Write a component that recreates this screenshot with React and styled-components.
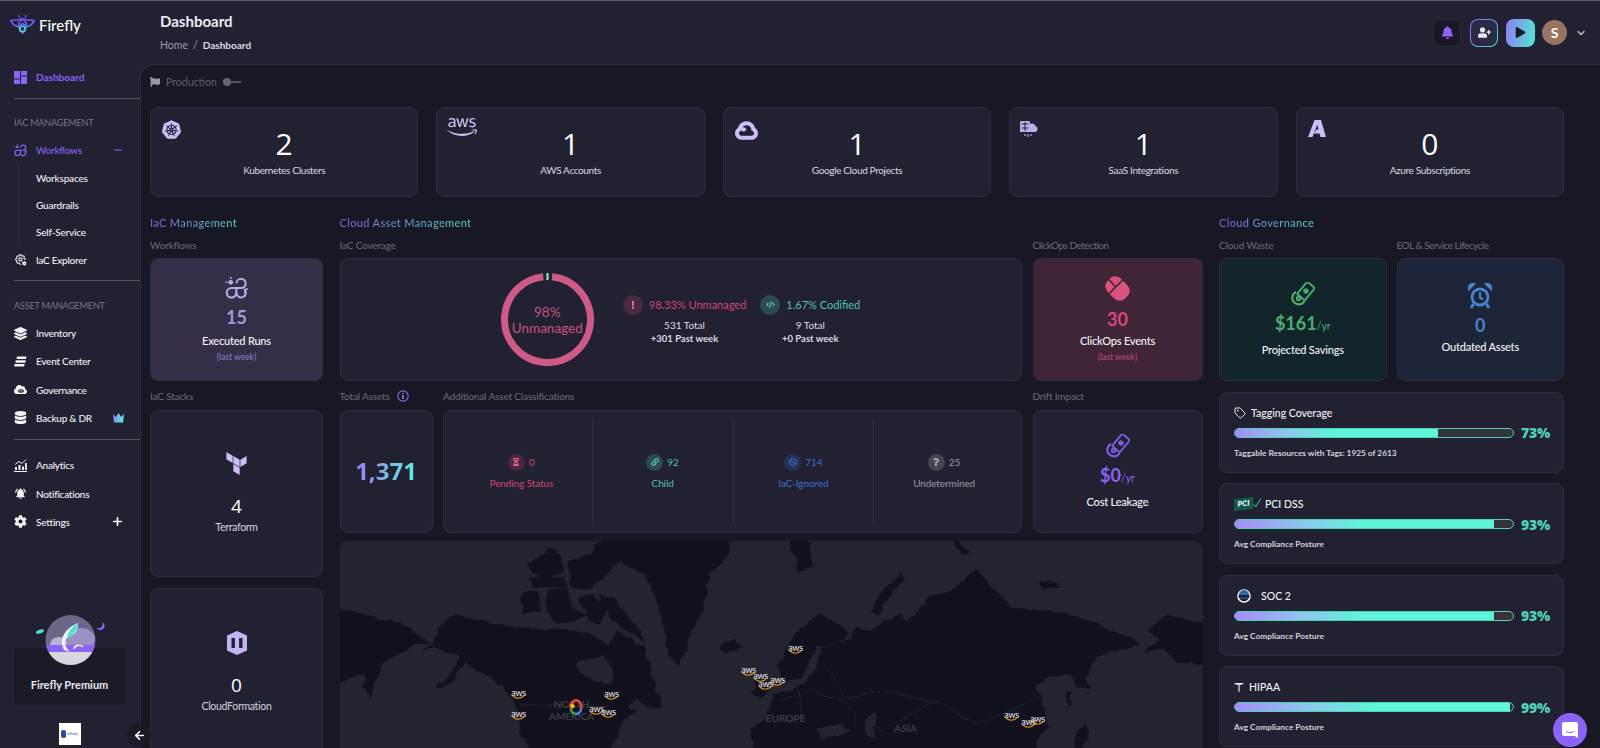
import styled, { createGlobalStyle } from 'styled-components'
import { FaAws, FaBell, FaCog, FaDatabase, FaLayerGroup, FaMouse, FaPlay, FaUserPlus, FaQuestion, FaExclamation, FaCode, FaHourglassHalf, FaBan, FaLink, FaFlag, FaCloud, FaEye } from 'react-icons/fa'
import { SiKubernetes, SiGooglecloud, SiTerraform } from 'react-icons/si'
import { LuTag, LuChevronDown, LuArrowLeft, LuPlus, LuMinus } from 'react-icons/lu'
import { MdNotificationsActive } from 'react-icons/md'
import { TbSettingsCog } from 'react-icons/tb'

const FONT = 'Lato, "Open Sans", sans-serif'

const GlobalStyle = createGlobalStyle`
	* { box-sizing: border-box; }
	html, body { margin: 0; height: 100%; background: #212132; overflow: hidden; }
	body { font-family: ${FONT}; color: #fff; }
`

const Shell = styled.div`
	display: flex;
	width: 1600px;
	height: 748px;
	border-top: 1px solid #5a5a60;
	background: #212132;
	position: relative;
	overflow: hidden;
`

/* Sidebar */
const Sidebar = styled.aside`
	width: 140px;
	flex-shrink: 0;
	height: 100%;
	display: flex;
	flex-direction: column;
	padding-left: 14px;
`
const Brand = styled.div`
	height: 47px;
	margin: 0 0 15px -4px;
	display: flex;
	align-items: center;
	gap: 4px;
	font-size: 15px;
	font-weight: 500;
`
const NavItem = styled.div`
	height: 28.3px;
	flex-shrink: 0;
	margin-top: ${(p) => p.$top || 0}px;
	display: flex;
	align-items: center;
	gap: 9px;
	font-size: 10px;
	letter-spacing: ${(p) => (p.$strong ? 0 : -0.25)}px;
	font-weight: ${(p) => (p.$strong ? 700 : 500)};
	color: ${(p) => (p.$active ? '#8b63f6' : '#f1f1f6')};
	svg.lead { width: 13px; height: 13px; flex-shrink: 0; }
`
const NavTail = styled.span`
	margin-left: auto;
	margin-right: 16px;
	display: flex;
	align-items: center;
	color: ${(p) => p.$color || '#fff'};
`
const NavTitle = styled.div`
	height: 14px;
	line-height: 14px;
	margin: ${(p) => p.$top}px 0 6px;
	font-size: 9px;
	letter-spacing: -0.15px;
	color: #777783;
`
const NavRule = styled.div`
	height: 1px;
	flex-shrink: 0;
	margin-top: ${(p) => p.$top}px;
	background: #55555f;
`
const SubNav = styled.div`
	margin-left: 4px;
	padding-left: 17px;
	border-left: 1px solid #2d2d40;
`
const SubItem = styled.div`
	height: 27px;
	display: flex;
	align-items: center;
	font-size: 10px;
	letter-spacing: -0.2px;
	font-weight: 500;
	color: #f1f1f6;
`
const SideFoot = styled.div`
	margin-top: auto;
	display: flex;
	flex-direction: column;
	align-items: center;
	width: 111px;
`
const PremiumCard = styled.div`
	position: relative;
	width: 111px;
	height: 57px;
	background: #1b1b28;
	border-radius: 4px;
	display: flex;
	align-items: flex-end;
	justify-content: center;
	padding-bottom: 14px;
	font-size: 11px;
	font-weight: 700;
	color: #e8e8ee;
`
const PremiumBadge = styled.svg`
	position: absolute;
	left: 20px;
	top: -36px;
`
const PartnerLogo = styled.div`
	width: 22px;
	height: 22px;
	margin: 18px 0 3px;
	background: #fff;
	display: flex;
	align-items: center;
	justify-content: center;
	gap: 1px;
	font-size: 3.5px;
	color: #2b4aa0;
`
const PartnerDot = styled.span`
	width: 5px;
	height: 8px;
	border-radius: 2px;
	background: #2b4aa0;
`
const CollapseButton = styled.div`
	position: absolute;
	left: 127px;
	top: 722px;
	width: 24px;
	height: 24px;
	border-radius: 50%;
	background: #1b1b28;
	display: flex;
	align-items: center;
	justify-content: center;
	z-index: 3;
`
const GovernanceGlyph = styled.span`
	position: relative;
	width: 13px;
	height: 13px;
	display: flex;
	flex-shrink: 0;
	svg + svg { position: absolute; left: 4px; top: 5px; }
`

/* Header */
const Content = styled.div`
	flex: 1;
	min-width: 0;
	display: flex;
	flex-direction: column;
`
const Header = styled.header`
	height: 63px;
	flex-shrink: 0;
	display: flex;
	justify-content: space-between;
	align-items: flex-start;
	padding: 10px 13px 0 20px;
`
const PageTitle = styled.h1`
	margin: 0;
	font-size: 15px;
	line-height: 20px;
	font-weight: 700;
	color: #ecebf2;
`
const Crumbs = styled.div`
	margin-top: 7px;
	display: flex;
	gap: 5px;
	font-size: 10.5px;
	line-height: 14px;
	color: #9b9ba6;
	b { font-size: 10px; font-weight: 700; color: #dcdce4; }
`
const Actions = styled.div`
	display: flex;
	align-items: center;
	height: 29px;
	margin-top: 7px;
	gap: 9px;
`
const ActionBox = styled.div`
	width: 28px;
	height: 28px;
	border-radius: 8px;
	display: flex;
	align-items: center;
	justify-content: center;
	background: #191925;
	border: 1px solid #2a2a3a;
`
const InviteBox = styled(ActionBox)`
	border: 1px solid transparent;
	background: linear-gradient(#2a2a44, #2a2a44) padding-box, linear-gradient(135deg, #8b63f6, #4fe3cc) border-box;
`
const PlayBox = styled(ActionBox)`
	border: 0;
	margin-left: -1px;
	width: 29px;
	background: linear-gradient(100deg, #8f7ff5, #50e8d0);
`
const Avatar = styled.div`
	width: 25px;
	height: 25px;
	margin-left: -2px;
	border-radius: 50%;
	background: #9a7260;
	display: flex;
	align-items: center;
	justify-content: center;
	font-size: 14px;
	font-weight: 700;
`
const Chevron = styled(LuChevronDown)`
	margin-left: -1px;
	color: #b8b8c0;
`

/* Panel */
const Panel = styled.main`
	flex: 1;
	min-height: 0;
	overflow: hidden;
	background: #181825;
	border-top: 1px solid #2b2b3d;
	border-left: 1px solid #2b2b3d;
	border-top-left-radius: 14px;
	padding: 0 35px 0 9px;
`
const EnvRow = styled.div`
	height: 34px;
	margin-bottom: 8px;
	display: flex;
	align-items: center;
	font-size: 10.5px;
	color: #5f5f6b;
	gap: 6px;
`
const Toggle = styled.span`
	position: relative;
	width: 18px;
	height: 2px;
	background: #55555f;
	&::before {
		content: '';
		position: absolute;
		left: 0;
		top: -3px;
		width: 8px;
		height: 8px;
		border-radius: 50%;
		background: #666670;
	}
`
const Card = styled.div`
	position: relative;
	background: ${(p) => p.$bg || '#212132'};
	border: 1px solid ${(p) => p.$line || '#2d2d42'};
	border-radius: 8px;
`
const TopRow = styled.div`
	display: grid;
	grid-template-columns: repeat(5, 1fr);
	gap: 18px;
	width: 1414px;
`
const TopCard = styled(Card)`
	height: 90px;
	display: flex;
	flex-direction: column;
	align-items: center;
	padding-top: 18px;
`
const TopIcon = styled.span`
	position: absolute;
	left: ${(p) => p.$left || 11}px;
	top: ${(p) => p.$top || 12}px;
	display: flex;
	color: #cdbdf6;
`
const TopValue = styled.div`
	font-family: "Open Sans", sans-serif;
	font-size: 30px;
	line-height: 36px;
	color: #fff;
`
const TopLabel = styled.div`
	margin-top: 1px;
	font-size: 10px;
	letter-spacing: -0.35px;
	line-height: 14px;
	color: #d9d9e0;
`
const Columns = styled.div`
	display: grid;
	grid-template-columns: 173px 863px 345px;
	column-gap: 16.5px;
	margin-top: 18px;
	width: 1415px;
`
const Column = styled.section`
	min-width: 0;
`
const Heading = styled.h2`
	margin: 0;
	width: max-content;
	font-size: 11px;
	line-height: 16px;
	font-weight: 500;
	letter-spacing: 0.35px;
	background: linear-gradient(90deg, #7c5cdc, #4fd1b8);
	-webkit-background-clip: text;
	background-clip: text;
	color: transparent;
`
const Label = styled.div`
	height: ${(p) => p.$h || 27}px;
	display: flex;
	align-items: center;
	gap: 7px;
	font-size: 10px;
	letter-spacing: ${(p) => (p.$tight ? -0.5 : -0.15)}px;
	color: #6c6c78;
`
const StatCard = styled(Card)`
	height: ${(p) => p.$h}px;
	display: flex;
	flex-direction: column;
	align-items: center;
	justify-content: center;
	padding-bottom: ${(p) => p.$pb || 0}px;
`
const StatIcon = styled.span`
	display: flex;
	margin-bottom: ${(p) => p.$mb || 6}px;
	color: ${(p) => p.$color};
`
const StatValue = styled.div`
	font-size: 18px;
	line-height: 22px;
	font-weight: 700;
	color: ${(p) => p.$color};
	small { font-size: 10.5px; font-weight: 400; }
`
const StatName = styled.div`
	margin-top: ${(p) => p.$mt || 5}px;
	font-size: 11px;
	letter-spacing: -0.2px;
	line-height: 15px;
	font-weight: 500;
	color: #f4f4f8;
`
const StatNote = styled.div`
	margin-top: 4px;
	font-size: 8.5px;
	line-height: 11px;
	color: ${(p) => p.$color};
`
const StackValue = styled.div`
	font-family: "Open Sans", sans-serif;
	font-size: 19px;
	line-height: 24px;
	color: #fff;
`
const StackName = styled.div`
	margin-top: 2px;
	font-size: 10.5px;
	letter-spacing: -0.3px;
	line-height: 15px;
	color: #d4d4dc;
`
const StackGap = styled.div`
	height: 11px;
`
const AssetGrid = styled.div`
	display: grid;
	grid-template-columns: 93px 579px 170px;
	column-gap: 10.5px;
`
const CoverageRow = styled.div`
	display: grid;
	grid-template-columns: 682px 170px;
	column-gap: 11px;
`
const CoverageCard = styled(Card)`
	height: 123px;
	display: flex;
	align-items: center;
	justify-content: center;
	gap: 29px;
`
const Donut = styled.div`
	position: relative;
	width: 93px;
	height: 93px;
	display: flex;
	flex-direction: column;
	align-items: center;
	justify-content: center;
	font-size: 13.5px;
	line-height: 16px;
	color: #c9527f;
	svg { position: absolute; inset: 0; }
`
const Legend = styled.div`
	display: flex;
	gap: 14px;
`
const LegendItem = styled.div`
	display: flex;
	flex-direction: column;
	align-items: center;
`
const LegendHead = styled.div`
	display: flex;
	align-items: center;
	gap: 6px;
	font-size: 11px;
	line-height: 20px;
	color: ${(p) => p.$color};
`
const IconDot = styled.span`
	width: ${(p) => p.$size || 20}px;
	height: ${(p) => p.$size || 20}px;
	border-radius: 50%;
	display: flex;
	align-items: center;
	justify-content: center;
	flex-shrink: 0;
	background: ${(p) => p.$bg};
	color: ${(p) => p.$color};
`
const LegendLine = styled.div`
	margin-top: ${(p) => p.$mt || 0}px;
	font-size: ${(p) => (p.$bold ? 9.5 : 10)}px;
	line-height: 13px;
	font-weight: ${(p) => (p.$bold ? 700 : 400)};
	color: #dcdce4;
`
const TotalCard = styled(Card)`
	height: 123px;
	display: flex;
	align-items: center;
	justify-content: center;
	padding-bottom: 3px;
`
const TotalValue = styled.div`
	font-family: "Open Sans", sans-serif;
	font-size: 24px;
	font-weight: 700;
	background: linear-gradient(90deg, #9a80f8, #5ef0d8);
	-webkit-background-clip: text;
	background-clip: text;
	color: transparent;
`
const ClassCard = styled(Card)`
	height: 123px;
	display: grid;
	grid-template-columns: repeat(4, 1fr);
	padding: 8px 7px;
`
const ClassCell = styled.div`
	display: flex;
	flex-direction: column;
	align-items: center;
	justify-content: center;
	gap: 5px;
	border-left: ${(p) => (p.$first ? 'none' : '1px solid #2f2f42')};
`
const ClassCount = styled.div`
	display: flex;
	align-items: center;
	gap: 4px;
	font-size: 10px;
	color: ${(p) => p.$color};
`
const ClassName = styled.div`
	font-size: 10px;
	letter-spacing: -0.1px;
	line-height: 14px;
	color: ${(p) => p.$color};
`
const TiltedMouse = styled(FaMouse)`
	transform: rotate(-45deg);
`

/* Map */
const MapBox = styled.div`
	position: relative;
	margin-top: 8px;
	height: 220px;
	border-radius: 8px;
	overflow: hidden;
	background: #24242f;
`
const MapArt = styled.svg`
	display: block;
`
const MapLabel = styled.span`
	position: absolute;
	left: ${(p) => p.$x}px;
	top: ${(p) => p.$y}px;
	transform: translate(-50%, -50%);
	text-align: center;
	font-size: 10px;
	line-height: 12px;
	font-weight: 700;
	color: #3c3c48;
`
const Pin = styled.span`
	position: absolute;
	left: ${(p) => p.$x}px;
	top: ${(p) => p.$y}px;
	transform: translate(-50%, -50%);
	display: flex;
	flex-direction: column;
	align-items: center;
	font-size: 9px;
	line-height: 7px;
	letter-spacing: -0.3px;
	color: #f0f0f0;
`

/* Governance */
const WasteRow = styled.div`
	display: grid;
	grid-template-columns: 167.5px 167.5px;
	column-gap: 10px;
`
const Gauge = styled(Card)`
	height: ${(p) => p.$h || 81}px;
	margin-top: 10.5px;
	padding: 11px 14px 0;
`
const GaugeTitle = styled.div`
	height: 18px;
	display: flex;
	align-items: center;
	gap: ${(p) => p.$gap || 5}px;
	font-size: 10.5px;
	font-weight: 500;
	color: #f4f4f8;
`
const GaugeRow = styled.div`
	display: flex;
	align-items: center;
	gap: 7px;
	margin-top: 5px;
	height: 12px;
`
const Track = styled.div`
	width: 280px;
	height: 10px;
	flex-shrink: 0;
	border: 1px solid #4fd1b8;
	border-radius: 5px;
	background: #333338;
	overflow: hidden;
`
const Fill = styled.div`
	height: 100%;
	width: ${(p) => p.$pct}%;
	background: linear-gradient(90deg, #a78bfa 0, #8ec5ee 25%, #5ef5d8 50%, #5ef5d8 100%);
`
const GaugeValue = styled.div`
	font-family: "Open Sans", sans-serif;
	font-size: 14px;
	font-weight: 800;
	letter-spacing: -0.2px;
	color: #4fd1b8;
`
const GaugeNote = styled.div`
	margin-top: 8px;
	font-size: 8.3px;
	line-height: 12px;
	font-weight: 700;
	color: #d4d4dc;
`
const PciMark = styled.span`
	position: relative;
	width: 19px;
	height: 12px;
	background: #125a50;
	transform: skewY(-6deg);
	font-size: 7.5px;
	line-height: 12px;
	font-weight: 900;
	text-align: center;
	color: #fff;
	margin-right: 7px;
	&::after {
		content: '';
		position: absolute;
		right: -6px;
		top: 1px;
		width: 3px;
		height: 8px;
		border-right: 1.5px solid #35c46a;
		border-bottom: 1.5px solid #35c46a;
		transform: rotate(35deg);
	}
`
const SocSlot = styled.span`
	display: flex;
	margin-left: 3px;
`
const ChatBubble = styled.div`
	position: absolute;
	right: 13px;
	top: 712px;
	width: 34px;
	height: 34px;
	border-radius: 50%;
	background: #8b63f6;
	display: flex;
	align-items: center;
	justify-content: center;
	z-index: 3;
`

/* Drawn icons */
const FireflyLogo = () => (
	<svg width="25" height="21" viewBox="0 0 25 21" fill="none">
		<defs>
			<linearGradient id="bee" x1="0" y1="0" x2="1" y2="1">
				<stop offset="0" stopColor="#7b4df0" />
				<stop offset="1" stopColor="#4d7ff0" />
			</linearGradient>
		</defs>
		<path d="M12.5 5 L7 6 L0.5 6.5 L4 11 L8 12.5 L12.5 9.5 L17 12.5 L21 11 L24.5 6.5 L18 6 Z" stroke="url(#bee)" strokeWidth="1.6" />
		<path d="M12.5 5 L9 8.5 L8.5 13 L12.5 19 L16.5 13 L16 8.5 Z" stroke="url(#bee)" strokeWidth="1.6" />
		<circle cx="12.5" cy="15" r="2.8" stroke="#4fd1e0" strokeWidth="1.6" />
		<path d="M10 4 L8.5 1 M15 4 L16.5 1" stroke="#7b4df0" strokeWidth="1.2" />
	</svg>
)
const DashboardIcon = () => (
	<svg className="lead" viewBox="0 0 13 13" fill="#8b63f6">
		<rect x="0" y="0" width="6" height="7.5" />
		<rect x="7" y="0" width="6" height="4.5" />
		<rect x="0" y="8.5" width="6" height="4.5" />
		<rect x="7" y="5.5" width="6" height="7.5" />
	</svg>
)
const WorkflowIcon = ({ size = 13, color = '#8b63f6' }) => (
	<svg className="lead" width={size} height={size} viewBox="0 0 24 24" fill="none" stroke={color} strokeWidth="2.2">
		<path d="M12 6.5 A4.8 4.8 0 1 1 16.8 11.5 H6.8 A5 5 0 1 0 11.8 16.5 V11.5" />
		<path d="M11.8 16.5 A5 5 0 1 0 20.5 13" />
		<path d="M21 17 L20.5 13 L24 12.5" strokeWidth="1.8" />
		<circle cx="6" cy="5.5" r="2.5" fill={color} stroke="none" />
		<path d="M6 0 V2.2 M0.5 5.5 H2.7" strokeWidth="1.6" />
	</svg>
)
const EventIcon = () => (
	<svg className="lead" viewBox="0 0 13 13" fill="#f1f1f6">
		<path d="M3 1.5 H12.5 L12 4 H2.5 Z M1.8 5.3 H11.8 L11.3 7.8 H1.3 Z M0.6 9.1 H10.6 L10.1 11.6 H0 Z" />
	</svg>
)
const GovernanceIcon = () => (
	<GovernanceGlyph>
		<FaCloud size={13} color="#f1f1f6" />
		<FaEye size={6} color="#212132" />
	</GovernanceGlyph>
)
const AnalyticsIcon = () => (
	<svg className="lead" viewBox="0 0 13 13" fill="#f1f1f6">
		<path d="M0 12 H13 V13 H0 Z M1 8 H3 V11 H1 Z M4.5 6 H6.5 V11 H4.5 Z M8 7.5 H10 V11 H8 Z M11 4 H12.8 V11 H11 Z" />
		<path d="M1 5.5 L5 2.5 L8 4.5 L12 0.5" stroke="#f1f1f6" fill="none" strokeWidth="1" />
	</svg>
)
const CrownIcon = () => (
	<svg width="11" height="10" viewBox="0 0 11 10">
		<defs>
			<linearGradient id="crown" x1="0" y1="0" x2="1" y2="0">
				<stop offset="0" stopColor="#8b8bf6" />
				<stop offset="1" stopColor="#5ef0e0" />
			</linearGradient>
		</defs>
		<path d="M0 1 L2.8 4 L5.5 0 L8.2 4 L11 1 L10 9.5 H1 Z" fill="url(#crown)" />
	</svg>
)
const RocketBadge = () => (
	<PremiumBadge width="72" height="54" viewBox="0 0 72 54">
		<defs>
			<clipPath id="globe">
				<circle cx="36.5" cy="28" r="25" />
			</clipPath>
		</defs>
		<ellipse cx="6" cy="19.5" rx="4.2" ry="1.8" fill="#4fe3cc" transform="rotate(-20 6 19.5)" />
		<path d="M68 10 A4.2 4.2 0 1 1 62.5 15.5 A4 4 0 0 0 68 10 Z" fill="#8b63f6" />
		<g clipPath="url(#globe)">
			<rect x="10" y="0" width="54" height="54" fill="#6b6789" />
			<ellipse cx="47" cy="27" rx="14" ry="11" fill="#9a92c4" />
			<ellipse cx="25" cy="33" rx="9" ry="8" fill="#b9b3d8" />
			<rect x="10" y="33" width="54" height="7" fill="#8b63f6" />
			<rect x="10" y="40" width="54" height="14" fill="#d8d8dc" />
			<path d="M30 38 C24 26 32 16 44 11 C45 20 38 24 33 26 C30 30 30 34 36 40 Z" fill="#f0f0f4" />
			<path d="M33 25 C35 18 39 14 44 11 C44 17 40 22 35 26 Z" fill="#4fe3cc" />
			<path d="M40 37 a5 4 0 0 1 9 -2" stroke="#fff" strokeWidth="1.4" fill="none" />
		</g>
	</PremiumBadge>
)
const SaasIcon = () => (
	<svg width="19" height="17" viewBox="0 0 19 17" fill="#bfaee8">
		<path d="M0 1.5 Q0 0 1.5 0 H8.5 Q10 0 10 1.5 V11 H0 Z" />
		<path d="M10 3 A4 4 0 0 1 15.5 5 A3.2 3.2 0 0 1 15.5 11 H10 Z" />
		<path d="M1.5 3 H8.5 M1.5 7 H8.5 M5 1 V10" stroke="#212132" strokeWidth="1" />
		<path d="M5 13 V15 M8 13 V16 M11 13 V15" stroke="#bfaee8" strokeWidth="1.2" />
	</svg>
)
const AzureIcon = () => (
	<svg width="18" height="17" viewBox="0 0 18 17" fill="#cdbdf6">
		<path d="M6.5 0 H13 L18 17 H12.5 L11.6 13.5 H6 L8.5 9.5 H10.5 L9.3 4.8 L4.5 17 H0 Z" />
	</svg>
)
const CloudFormationIcon = () => (
	<svg width="20" height="24" viewBox="0 0 20 24" fill="#c4b3f2">
		<path d="M10 0 L20 4.5 V19.5 L10 24 L0 19.5 V4.5 Z" />
		<rect x="4.5" y="7" width="3.4" height="10" fill="#212132" />
		<rect x="12.1" y="7" width="3.4" height="10" fill="#212132" />
	</svg>
)
const MoneyIcon = ({ color, size = 24 }) => (
	<svg width={size} height={size} viewBox="0 0 24 24" fill="none" stroke={color} strokeWidth="1.9">
		<g transform="rotate(-50 15 9)">
			<rect x="7" y="4" width="16" height="10" rx="1" />
			<circle cx="15" cy="9" r="2.7" fill={color} stroke="none" />
		</g>
		<path d="M5 10 A6.5 6.5 0 1 0 13.5 19" strokeWidth="2.2" />
		<circle cx="7.5" cy="16.5" r="1.7" />
	</svg>
)
const AlarmIcon = () => (
	<svg width="24" height="26" viewBox="0 0 24 26" fill="none" stroke="#4a84d0" strokeWidth="2.8">
		<circle cx="12" cy="14" r="8" />
		<path d="M12 9 V14.5 L15 16.5" strokeWidth="2.2" />
		<path d="M5.5 21 L3 25 M18.5 21 L21 25" />
		<path d="M0 8.5 A6 6 0 0 1 8 0.5 Z M24 8.5 A6 6 0 0 0 16 0.5 Z" fill="#4a84d0" stroke="none" />
	</svg>
)
const SocIcon = () => (
	<svg width="14" height="14" viewBox="0 0 14 14" fill="none">
		<circle cx="7" cy="7" r="6" stroke="#fff" strokeWidth="1.6" />
		<path d="M2 6 A5 5 0 0 1 12 6 Z" fill="#2a6cb0" />
		<path d="M1 7.3 H13" stroke="#212132" strokeWidth="1" />
		<path d="M3 9 H11" stroke="#2a6cb0" strokeWidth="1" />
	</svg>
)
const HipaaIcon = () => (
	<svg width="10" height="9" viewBox="0 0 10 9" fill="#e8e8ee">
		<path d="M0 0 H4.4 V1.8 H2 Z M10 0 H5.6 V1.8 H8 Z M4.4 0 H5.6 V9 L5 9 L4.4 8 Z" />
	</svg>
)
const ChatIcon = () => (
	<svg width="16" height="16" viewBox="0 0 16 16">
		<path d="M2.5 0 H13.5 Q16 0 16 2.5 V16 L12.5 14 H2.5 Q0 14 0 11.5 V2.5 Q0 0 2.5 0 Z" fill="#fff" />
		<path d="M4 9.5 Q8 12 12 9.5" stroke="#8b63f6" strokeWidth="1" fill="none" />
	</svg>
)

const WorldMap = () => (
	<MapArt width="863" height="208" viewBox="16 30 1574 624" preserveAspectRatio="none">
		<defs>
			<filter id="coast" x="-5%" y="-5%" width="110%" height="110%" colorInterpolationFilters="sRGB">
				<feTurbulence type="fractalNoise" baseFrequency="0.035" numOctaves="4" seed="7" result="noise" />
				<feDisplacementMap in="SourceGraphic" in2="noise" scale="16" xChannelSelector="R" yChannelSelector="G" />
			</filter>
		</defs>
		<g stroke="#28284a" strokeWidth="1.2" fill="none">
			<path d="M16 325 H1590 M150 30 V654 M470 30 V654 M790 30 V654 M1120 30 V654 M1440 30 V654" />
		</g>
		<g fill="#11111d" filter="url(#coast)">
			<path d="M6 225 L40 240 L60 250 L95 268 L130 280 L160 310 L180 335 L150 345 L120 375 L95 400 L70 500 L60 470 L58 430 L40 440 L6 465 Z" />
			<path
				fillRule="evenodd"
				d="M195 290 L225 250 L265 268 L345 292 L400 295 L440 300 L470 305 L490 330 L505 345 L520 300 L550 320 L555 345 L570 345 L580 400 L590 470 L605 530 L575 525 L555 500 L540 530 L560 540 L530 570 L520 620 L505 670 L365 670 L345 600 L340 540 L325 490 L290 440 L245 400 L205 470 L190 470 L225 410 L235 375 L190 350 L170 360 L190 325 Z M450 390 L500 375 L515 420 L510 460 L480 450 L450 420 Z"
			/>
			<path d="M345 185 L375 180 L385 240 L350 250 Z" />
			<path d="M390 175 L430 170 L440 230 L470 255 L410 280 L395 240 Z" />
			<path d="M450 200 L475 190 L505 230 L490 280 L470 270 Z" />
			<path d="M485 190 L515 200 L550 270 L575 330 L535 300 L510 260 Z" />
			<path d="M355 105 L400 50 L420 75 L425 120 L385 145 Z" />
			<path d="M430 90 L470 70 L500 15 L560 15 L530 90 L500 130 L470 180 L440 170 Z" />
			<path d="M360 140 L420 135 L435 165 L370 170 Z" />
			<path d="M530 70 L560 15 L730 15 L720 80 L690 130 L680 230 L650 330 L635 410 L615 370 L605 280 L590 180 L570 130 L535 100 Z" />
			<path d="M708 340 L740 325 L746 350 L725 368 L712 360 Z" />
			<path d="M772 445 L790 440 L798 480 L780 500 L762 490 L775 470 Z" />
			<path d="M815 400 L835 340 L870 270 L890 250 L925 275 L945 310 L920 335 L885 350 L870 400 L860 440 L840 450 L820 440 Z" />
			<path d="M895 350 L945 320 L960 290 L985 300 L1010 265 L1040 250 L1050 275 L1075 230 L1090 195 L1130 180 L1175 115 L1205 170 L1240 230 L1290 235 L1340 245 L1400 280 L1445 310 L1480 340 L1440 355 L1400 375 L1375 440 L1385 470 L1360 470 L1350 430 L1310 435 L1285 470 L1300 530 L1310 590 L1290 620 L1280 670 L770 670 L765 590 L790 570 L800 530 L810 490 L850 470 L880 430 L890 380 Z" />
			<path d="M985 250 L1000 190 L1040 125 L1040 150 L1010 210 L995 255 Z" />
			<path d="M835 20 L865 20 L880 100 L855 125 L845 70 Z" />
			<path d="M1290 150 L1310 145 L1330 170 L1300 170 Z" />
			<path d="M1130 15 L1170 65 L1150 70 Z" />
			<path d="M1490 295 L1525 250 L1568 270 L1610 280 L1610 400 L1540 395 L1520 350 L1485 365 L1505 325 Z" />
			<path d="M1360 600 L1375 580 L1380 620 L1360 670 Z" />
			<path d="M1340 480 L1350 480 L1345 540 Z" />
		</g>
		<g fill="#24242f" filter="url(#coast)">
			<path d="M880 590 L930 580 L945 600 L900 620 Z" />
			<path d="M975 560 L990 545 L995 620 L975 610 Z" />
		</g>
		<g stroke="#2b2b38" strokeWidth="1.5" fill="none" filter="url(#coast)">
			<path d="M820 510 L880 480 L940 510 M850 470 L860 560 M900 400 L940 500 L1010 480 L1100 510 L1180 580 L1250 530 L1290 500" />
			<path d="M940 510 L960 580 M1100 510 L1050 560 L1000 600 M345 523 H505" />
		</g>
	</MapArt>
)

const topCards = [
	{ label: 'Kubernetes Clusters', value: 2, icon: <SiKubernetes size={19} /> },
	{ label: 'AWS Accounts', value: 1, icon: <FaAws size={30} />, left: 10, top: 4 },
	{ label: 'Google Cloud Projects', value: 1, icon: <SiGooglecloud size={23} />, left: 11, top: 11 },
	{ label: 'SaaS Integrations', value: 1, icon: <SaasIcon />, left: 10, top: 13 },
	{ label: 'Azure Subscriptions', value: 0, icon: <AzureIcon /> },
]
const classes = [
	{ name: 'Pending Status', count: 0, color: '#d1476f', bg: '#4a2a42', tone: '#e85d8c', icon: <FaHourglassHalf size={8} /> },
	{ name: 'Child', count: 92, color: '#4fc4ac', bg: '#2d4a50', tone: '#4fc4ac', icon: <FaLink size={8} /> },
	{ name: 'IaC-Ignored', count: 714, color: '#3b6fd0', bg: '#24325a', tone: '#3b6fd0', icon: <FaBan size={8} /> },
	{ name: 'Undetermined', count: 25, color: '#9a9aa6', bg: '#45454f', tone: '#b0b0b8', icon: <FaQuestion size={8} /> },
]
const awsPins = [
	[179, 153], [179, 174], [272, 154], [257, 169], [269, 172], [456, 108], [409, 130],
	[421, 136], [426, 144], [438, 140], [672, 175], [689, 182], [698, 179],
]

const App = () => {
	return (
		<Shell>
			<GlobalStyle />
			<Sidebar>
				<Brand>
					<FireflyLogo />
					Firefly
				</Brand>
				<NavItem $active $strong>
					<DashboardIcon />
					Dashboard
				</NavItem>
				<NavRule $top={7} />
				<NavTitle $top={17}>IAC MANAGEMENT</NavTitle>
				<NavItem $active>
					<WorkflowIcon />
					Workflows
					<NavTail $color="#8b63f6"><LuMinus size={12} /></NavTail>
				</NavItem>
				<SubNav>
					<SubItem>Workspaces</SubItem>
					<SubItem>Guardrails</SubItem>
					<SubItem>Self-Service</SubItem>
				</SubNav>
				<NavItem>
					<TbSettingsCog className="lead" />
					IaC Explorer
				</NavItem>
				<NavRule $top={6} />
				<NavTitle $top={18}>ASSET MANAGEMENT</NavTitle>
				<NavItem>
					<FaLayerGroup className="lead" />
					Inventory
				</NavItem>
				<NavItem>
					<EventIcon />
					Event Center
				</NavItem>
				<NavItem>
					<GovernanceIcon />
					Governance
				</NavItem>
				<NavItem>
					<FaDatabase className="lead" />
					Backup &amp; DR
					<NavTail><CrownIcon /></NavTail>
				</NavItem>
				<NavRule $top={7} />
				<NavItem $top={11}>
					<AnalyticsIcon />
					Analytics
				</NavItem>
				<NavItem>
					<MdNotificationsActive className="lead" />
					Notifications
				</NavItem>
				<NavItem>
					<FaCog className="lead" />
					Settings
					<NavTail><LuPlus size={13} strokeWidth={3} /></NavTail>
				</NavItem>
				<SideFoot>
					<PremiumCard>
						<RocketBadge />
						Firefly Premium
					</PremiumCard>
					<PartnerLogo>
						<PartnerDot />
						Infinity
					</PartnerLogo>
				</SideFoot>
			</Sidebar>
			<CollapseButton>
				<LuArrowLeft size={13} color="#fff" strokeWidth={3} />
			</CollapseButton>

			<Content>
				<Header>
					<div>
						<PageTitle>Dashboard</PageTitle>
						<Crumbs>
							Home <span>/</span> <b>Dashboard</b>
						</Crumbs>
					</div>
					<Actions>
						<ActionBox><FaBell size={13} color="#8b63f6" /></ActionBox>
						<InviteBox><FaUserPlus size={13} color="#e8e8f0" /></InviteBox>
						<PlayBox><FaPlay size={11} color="#1b1b28" /></PlayBox>
						<Avatar>S</Avatar>
						<Chevron size={12} strokeWidth={3} />
					</Actions>
				</Header>
				<Panel>
					<EnvRow>
						<FaFlag size={10} color="#9a9aa4" />
						Production
						<Toggle />
					</EnvRow>
					<TopRow>
						{topCards.map((c) => (
							<TopCard key={c.label}>
								<TopIcon $left={c.left} $top={c.top}>{c.icon}</TopIcon>
								<TopValue>{c.value}</TopValue>
								<TopLabel>{c.label}</TopLabel>
							</TopCard>
						))}
					</TopRow>
					<Columns>
						<Column>
							<Heading>IaC Management</Heading>
							<Label>Workflows</Label>
							<StatCard $h={123} $bg="#342f47">
								<StatIcon $color="#b9a9e6" $mb={6}><WorkflowIcon size={23} color="#b9a9e6" /></StatIcon>
								<StatValue $color="#a596dc">15</StatValue>
								<StatName $mt={5}>Executed Runs</StatName>
								<StatNote $color="#8f7fd0">(last week)</StatNote>
							</StatCard>
							<Label $h={29}>IaC Stacks</Label>
							<StatCard $h={167}>
								<StatIcon $color="#cdbdf6" $mb={19}><SiTerraform size={23} /></StatIcon>
								<StackValue>4</StackValue>
								<StackName>Terraform</StackName>
							</StatCard>
							<StackGap />
							<StatCard $h={170} $pb={2}>
								<StatIcon $color="#cdbdf6" $mb={18}><CloudFormationIcon /></StatIcon>
								<StackValue>0</StackValue>
								<StackName>CloudFormation</StackName>
							</StatCard>
						</Column>

						<Column>
							<Heading>Cloud Asset Management</Heading>
							<CoverageRow>
								<div>
									<Label>IaC Coverage</Label>
									<CoverageCard>
										<Donut>
											<svg width="93" height="93" viewBox="0 0 93 93" fill="none">
												<circle cx="46.5" cy="46.5" r="43" stroke="#cf5a85" strokeWidth="7" strokeDasharray="261 9.2" transform="rotate(-84 46.5 46.5)" />
												<rect x="45.3" y="0" width="2.4" height="7" fill="#6fdcc8" />
											</svg>
											<span>98%</span>
											<span>Unmanaged</span>
										</Donut>
										<Legend>
											<LegendItem>
												<LegendHead $color="#d1476f">
													<IconDot $bg="#4a2a42" $color="#e0668f"><FaExclamation size={8} /></IconDot>
													98.33% Unmanaged
												</LegendHead>
												<LegendLine $mt={4}>531 Total</LegendLine>
												<LegendLine $bold>+301 Past week</LegendLine>
											</LegendItem>
											<LegendItem>
												<LegendHead $color="#4fc4ac">
													<IconDot $bg="#2d4a50" $color="#4fc4ac"><FaCode size={9} /></IconDot>
													1.67% Codified
												</LegendHead>
												<LegendLine $mt={4}>9 Total</LegendLine>
												<LegendLine $bold>+0 Past week</LegendLine>
											</LegendItem>
										</Legend>
									</CoverageCard>
								</div>
								<div>
									<Label $tight>ClickOps Detection</Label>
									<StatCard $h={123} $bg="#3f2536">
										<StatIcon $color="#d9537f" $mb={7}><TiltedMouse size={25} /></StatIcon>
										<StatValue $color="#d9487a">30</StatValue>
										<StatName $mt={3}>ClickOps Events</StatName>
										<StatNote $color="#c9487a">(last week)</StatNote>
									</StatCard>
								</div>
							</CoverageRow>
							<AssetGrid>
								<Label $h={29}>
									Total Assets
									<svg width="12" height="12" viewBox="0 0 12 12" fill="none">
										<circle cx="6" cy="6" r="5.2" stroke="#8b63f6" strokeWidth="1.2" />
										<path d="M6 3 V4 M6 5 V9" stroke="#c4b3f2" strokeWidth="1.2" />
									</svg>
								</Label>
								<Label $h={29}>Additional Asset Classifications</Label>
								<Label $h={29}>Drift Impact</Label>
								<TotalCard>
									<TotalValue>1,371</TotalValue>
								</TotalCard>
								<ClassCard>
									{classes.map((c, i) => (
										<ClassCell key={c.name} $first={i === 0}>
											<ClassCount $color={c.color}>
												<IconDot $size={17} $bg={c.bg} $color={c.tone}>{c.icon}</IconDot>
												{c.count}
											</ClassCount>
											<ClassName $color={c.color}>{c.name}</ClassName>
										</ClassCell>
									))}
								</ClassCard>
								<StatCard $h={123}>
									<StatIcon $color="#7c5ce0" $mb={6}><MoneyIcon color="#7c5ce0" /></StatIcon>
									<StatValue $color="#8b63f6">$0<small>/yr</small></StatValue>
									<StatName $mt={5}>Cost Leakage</StatName>
								</StatCard>
							</AssetGrid>
							<MapBox>
								<WorldMap />
								<MapLabel $x={232} $y={169}>NORTH<br />AMERICA</MapLabel>
								<MapLabel $x={446} $y={177}>EUROPE</MapLabel>
								<MapLabel $x={566} $y={187}>ASIA</MapLabel>
								{awsPins.map(([x, y]) => (
									<Pin key={`${x}-${y}`} $x={x} $y={y}>
										aws
										<svg width="13" height="4" viewBox="0 0 13 4" fill="none">
											<path d="M1 0.5 Q6.5 5 12 0.5" stroke="#e8941a" strokeWidth="1.1" />
										</svg>
									</Pin>
								))}
								<Pin $x={236} $y={166}>
									<svg width="14" height="18" viewBox="0 0 14 18" fill="none" strokeWidth="2.6">
										<path d="M2 11 A6 7 0 0 1 7 2" stroke="#ea4335" />
										<path d="M7 2 A6 7 0 0 1 12 11" stroke="#ea4335" />
										<path d="M12 11 A6 5 0 0 1 7 16" stroke="#4285f4" />
										<path d="M7 16 A6 5 0 0 1 2 11" stroke="#34a853" />
										<path d="M2 9 L5 7" stroke="#fbbc05" strokeWidth="4" />
									</svg>
								</Pin>
							</MapBox>
						</Column>

						<Column>
							<Heading>Cloud Governance</Heading>
							<WasteRow>
								<div>
									<Label>Cloud Waste</Label>
									<StatCard $h={123} $bg="#11252a">
										<StatIcon $color="#4caf6e" $mb={6}><MoneyIcon color="#4caf6e" /></StatIcon>
										<StatValue $color="#4caf6e">$161<small>/yr</small></StatValue>
										<StatName $mt={5}>Projected Savings</StatName>
									</StatCard>
								</div>
								<div>
									<Label $tight>EOL &amp; Service Lifecycle</Label>
									<StatCard $h={123} $bg="#1e2538" $pb={3}>
										<StatIcon $color="#4a84d0" $mb={5}><AlarmIcon /></StatIcon>
										<StatValue $color="#4a84d0">0</StatValue>
										<StatName $mt={3}>Outdated Assets</StatName>
									</StatCard>
								</div>
							</WasteRow>
							<Gauge>
								<GaugeTitle><LuTag size={12} />Tagging Coverage</GaugeTitle>
								<GaugeRow>
									<Track><Fill $pct={73} /></Track>
									<GaugeValue>73%</GaugeValue>
								</GaugeRow>
								<GaugeNote>Taggable Resources with Tags: 1925 of 2613</GaugeNote>
							</Gauge>
							<Gauge>
								<GaugeTitle><PciMark>PCI</PciMark>PCI DSS</GaugeTitle>
								<GaugeRow>
									<Track><Fill $pct={93} /></Track>
									<GaugeValue>93%</GaugeValue>
								</GaugeRow>
								<GaugeNote>Avg Compliance Posture</GaugeNote>
							</Gauge>
							<Gauge>
								<GaugeTitle $gap={10}>
									<SocSlot><SocIcon /></SocSlot>
									SOC 2
								</GaugeTitle>
								<GaugeRow>
									<Track><Fill $pct={93} /></Track>
									<GaugeValue>93%</GaugeValue>
								</GaugeRow>
								<GaugeNote>Avg Compliance Posture</GaugeNote>
							</Gauge>
							<Gauge>
								<GaugeTitle><HipaaIcon />HIPAA</GaugeTitle>
								<GaugeRow>
									<Track><Fill $pct={99} /></Track>
									<GaugeValue>99%</GaugeValue>
								</GaugeRow>
								<GaugeNote>Avg Compliance Posture</GaugeNote>
							</Gauge>
						</Column>
					</Columns>
				</Panel>
			</Content>
			<ChatBubble><ChatIcon /></ChatBubble>
		</Shell>
	)
}

export default App
